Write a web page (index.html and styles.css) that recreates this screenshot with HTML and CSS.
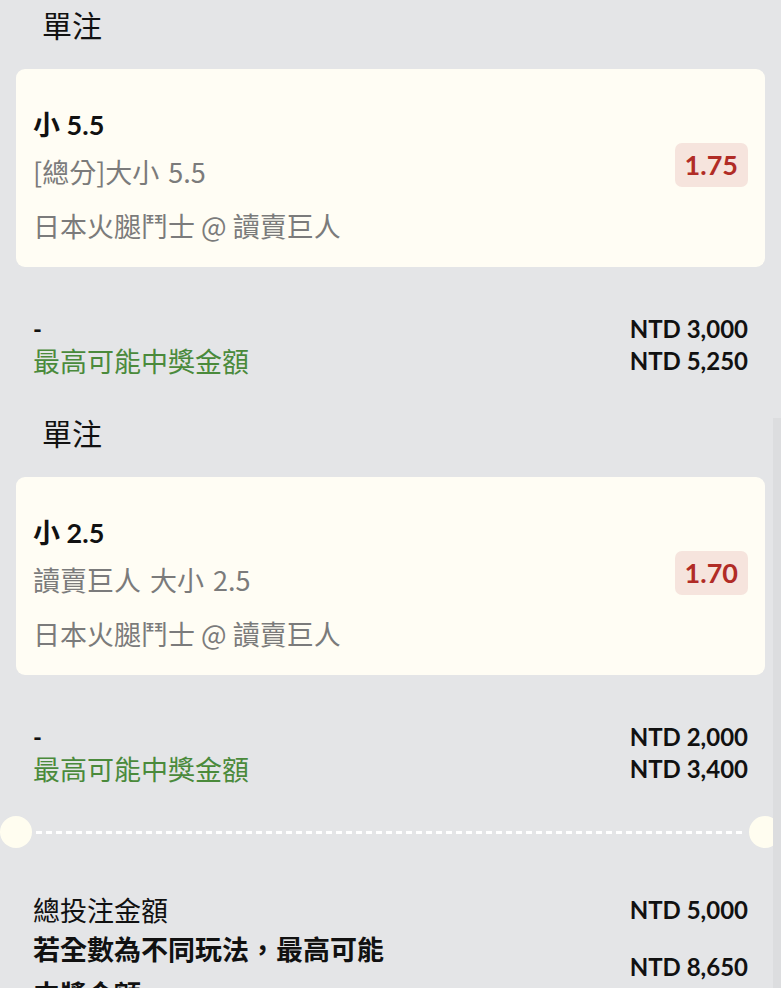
FILE: index.html
```html
<!DOCTYPE html>
<html lang="zh-Hant">

<head>
    <meta charset="UTF-8">
    <meta name="viewport" content="width=device-width, initial-scale=1.0">
    <title>投注單</title>

    <link rel="stylesheet" href="styles.css">
</head>

<body>
    <div class="page">
        <div class="bet-group">
            <h2 class="bet-type">單注</h2>
            <div class="bet-card">
                <div class="bet-info">
                    <div class="bet-pick">小 5.5</div>
                    <div class="bet-market">[總分]大小 5.5</div>
                    <div class="bet-match">日本火腿鬥士 @ 讀賣巨人</div>
                </div>
                <div class="odds">1.75</div>
            </div>
            <div class="bet-summary">
                <div class="summary-row">
                    <span class="stake-label">-</span>
                    <span class="amount">NTD 3,000</span>
                </div>
                <div class="summary-row">
                    <span class="win-label">最高可能中獎金額</span>
                    <span class="amount">NTD 5,250</span>
                </div>
            </div>
        </div>

        <div class="bet-group">
            <h2 class="bet-type">單注</h2>
            <div class="bet-card">
                <div class="bet-info">
                    <div class="bet-pick">小 2.5</div>
                    <div class="bet-market">讀賣巨人 大小 2.5</div>
                    <div class="bet-match">日本火腿鬥士 @ 讀賣巨人</div>
                </div>
                <div class="odds">1.70</div>
            </div>
            <div class="bet-summary">
                <div class="summary-row">
                    <span class="stake-label">-</span>
                    <span class="amount">NTD 2,000</span>
                </div>
                <div class="summary-row">
                    <span class="win-label">最高可能中獎金額</span>
                    <span class="amount">NTD 3,400</span>
                </div>
            </div>
        </div>

        <div class="divider">
            <span class="notch"></span>
            <span class="dashes"></span>
            <span class="notch"></span>
        </div>

        <div class="totals">
            <div class="total-row">
                <span class="total-label">總投注金額</span>
                <span class="amount">NTD 5,000</span>
            </div>
            <div class="total-row">
                <span class="total-label strong">若全數為不同玩法，最高可能中獎金額</span>
                <span class="amount">NTD 8,650</span>
            </div>
        </div>

        <div class="scroll-track"></div>
    </div>
</body>

</html>
```

FILE: styles.css
```css
body {
    margin: 0;
    background: #ffffff;
    font-family: Lato, "Noto Sans CJK TC", sans-serif;
    color: #111111;
}

.page {
    position: relative;
    height: 988px;
    overflow: hidden;
    background: #e4e5e7;
    padding-top: 2px;
    box-sizing: border-box;
}

.bet-type {
    margin: 0;
    padding-left: 42px;
    font-family: "Noto Sans CJK TC", sans-serif;
    font-size: 30px;
    font-weight: 400;
    line-height: 44px;
}

.bet-card {
    display: flex;
    align-items: center;
    justify-content: space-between;
    margin: 23px 16px 0;
    padding: 38px 17px 21px;
    background: #fffdf4;
    border-radius: 9px;
}

.bet-pick {
    font-size: 27px;
    font-weight: 700;
    line-height: 36px;
}

.bet-market,
.bet-match {
    font-family: "Noto Sans CJK TC", sans-serif;
    font-size: 27px;
    line-height: 40px;
    color: #7b7b7b;
}

.bet-market {
    margin-top: 9px;
    word-spacing: 3px;
}

.bet-match {
    margin-top: 14px;
}

.odds {
    padding: 0 10px;
    height: 44px;
    line-height: 44px;
    border-radius: 7px;
    background: #f6e4dd;
    color: #b12c26;
    font-size: 27px;
    font-weight: 700;
    margin-bottom: 23px;
}

.bet-summary {
    margin: 45px 33px 34px;
}

.summary-row,
.total-row {
    display: flex;
    align-items: center;
    justify-content: space-between;
}

.summary-row {
    height: 32px;
}

.stake-label {
    font-size: 24px;
    font-weight: 700;
}

.win-label {
    font-family: "Noto Sans CJK TC", sans-serif;
    font-size: 27px;
    color: #4a8a3b;
}

.amount {
    font-size: 24px;
    font-weight: 700;
    white-space: nowrap;
}

.divider {
    display: flex;
    align-items: center;
    margin: -2px 0 0;
    height: 32px;
}

.notch {
    flex: none;
    width: 32px;
    height: 32px;
    border-radius: 50%;
    background: #fffdf0;
}

.dashes {
    flex: 1;
    height: 3px;
    margin: 0 4px;
    background: repeating-linear-gradient(90deg, #ffffff 0 6px, transparent 6px 10px);
}

.totals {
    margin: 41px 33px 0;
}

.total-row:first-child {
    height: 40px;
}

.total-label {
    font-family: "Noto Sans CJK TC", sans-serif;
    font-size: 27px;
}

.total-label.strong {
    width: 360px;
    margin-top: -3px;
    font-weight: 700;
    line-height: 45px;
}

.total-row:last-child .amount {
    margin-top: -12px;
}

.scroll-track {
    position: absolute;
    top: 418px;
    right: 0;
    bottom: 0;
    width: 8px;
    background: #dcdddf;
}
```
